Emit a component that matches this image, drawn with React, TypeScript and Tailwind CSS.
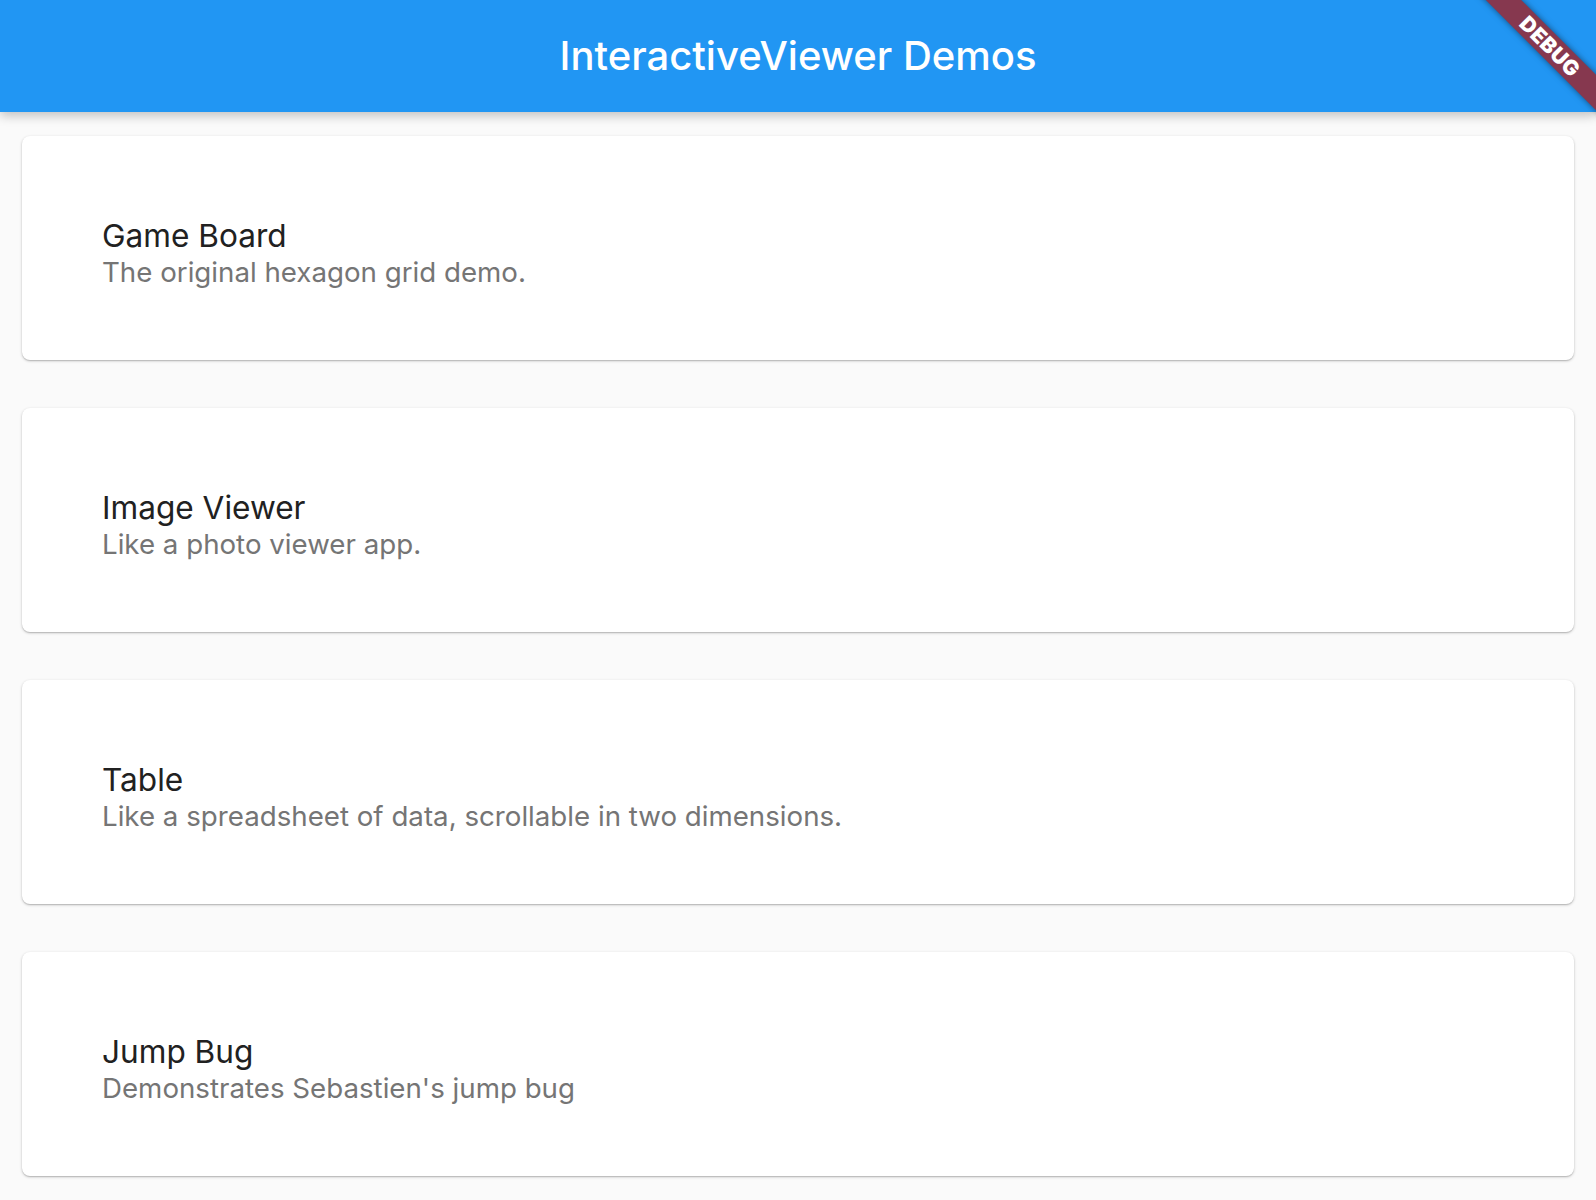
import React from "react";

const demos = [
  { title: "Game Board", subtitle: "The original hexagon grid demo." },
  { title: "Image Viewer", subtitle: "Like a photo viewer app." },
  { title: "Table", subtitle: "Like a spreadsheet of data, scrollable in two dimensions." },
  { title: "Jump Bug", subtitle: "Demonstrates Sebastien's jump bug" },
];

const DemoCard = ({ title, subtitle }: { title: string; subtitle: string }) => (
  <div className="h-[224px] bg-white rounded-[8px] shadow-[0_1px_3px_rgba(0,0,0,0.22),0_1px_1px_rgba(0,0,0,0.12)] flex flex-col justify-center pt-[8px] pl-[80px] cursor-pointer">
    <div className="text-[31.6px] leading-[40px] text-[#212121]">{title}</div>
    <div className="text-[27.7px] leading-[33px] text-[#757575]">{subtitle}</div>
  </div>
);

export default function App() {
  return (
    <div
      className="relative w-full min-h-[1200px] bg-[#fafafa] overflow-hidden"
      style={{ fontFamily: "Inter, 'Noto Sans', sans-serif" }}
    >
      <header className="relative z-10 h-[112px] bg-[#2196f3] flex items-center justify-center shadow-[0_4px_10px_rgba(0,0,0,0.22)]">
        <h1 className="text-[40px] leading-[48px] font-medium text-white">InteractiveViewer Demos</h1>
      </header>

      <main className="flex flex-col gap-[48px] px-[22px] pt-[24px] pb-[24px]">
        {demos.map((d) => (
          <DemoCard key={d.title} title={d.title} subtitle={d.subtitle} />
        ))}
      </main>

      {/* debug banner */}
      <div className="absolute z-20 top-[34px] right-[-54px] w-[200px] h-[25px] rotate-45 bg-[#86384f] shadow-[0_0_6px_rgba(0,0,0,0.5)] flex items-center justify-center">
        <span className="text-white text-[21px] leading-[21px] font-black tracking-[0.5px]">DEBUG</span>
      </div>
    </div>
  );
}
